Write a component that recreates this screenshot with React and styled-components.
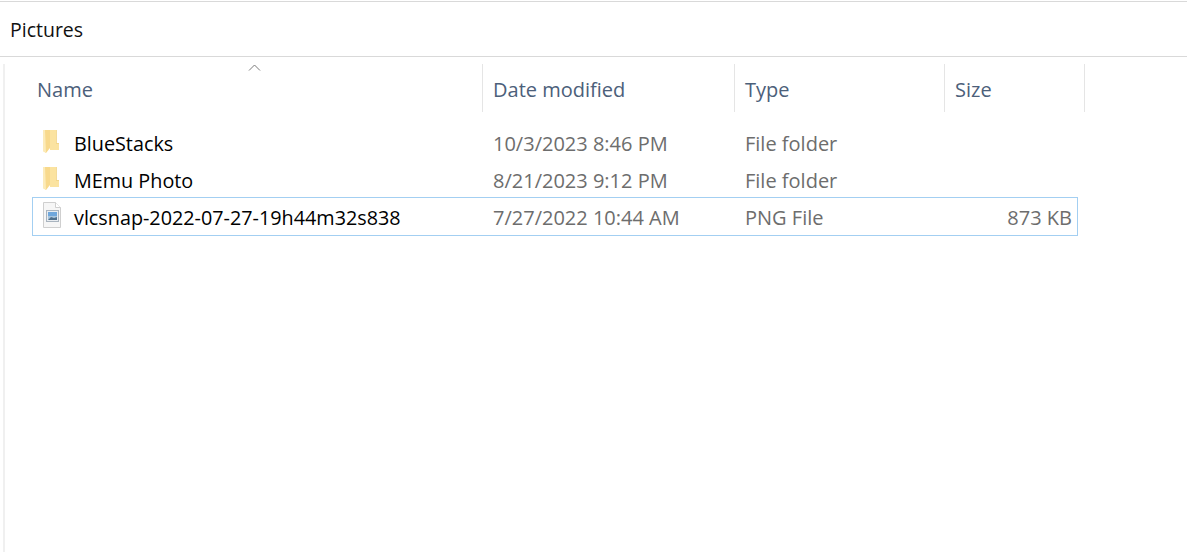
import styled, { createGlobalStyle } from "styled-components";

const GlobalStyle = createGlobalStyle`
  html, body {
    margin: 0;
    padding: 0;
    background: #fff;
    overflow: hidden;
  }
  body {
    font-family: "Open Sans", "Noto Sans", sans-serif;
  }
`;

const Window = styled.div`
  width: 1187px;
  height: 552px;
  display: flex;
  flex-direction: column;
  background: #fff;
  overflow: hidden;
`;

const TitleBar = styled.div`
  height: 56px;
  flex: none;
  box-sizing: border-box;
  border-top: 1px solid #d9d9d9;
  border-bottom: 1px solid #d9d9d9;
  padding: 0 0 0 10px;
  display: flex;
  align-items: center;
  margin-top: 1px;
  font-size: 19.5px;
  color: #111;
`;

const Body = styled.div`
  flex: 1;
  margin: 7px 0 0 3px;
  border-left: 2px solid #f0f0f0;
  padding-left: 27px;
`;

const HeaderRow = styled.div`
  position: relative;
  display: grid;
  grid-template-columns: 451px 252px 210px 140px;
  height: 48px;
`;

const HeaderCell = styled.div`
  box-sizing: border-box;
  padding: 3px 0 0 ${(p) => p.$pad}px;
  display: flex;
  align-items: center;
  border-right: 1px solid #e5e5e5;
  font-size: 20px;
  color: #4c607a;
`;

const SortCaret = styled.svg`
  position: absolute;
  left: 216px;
  top: 0;
  width: 13px;
  height: 7px;
`;

const Rows = styled.div`
  margin-top: 13px;
`;

const Row = styled.div`
  display: grid;
  grid-template-columns: 450px 252px 210px 127px;
  width: 1046px;
  height: ${(p) => (p.$selected ? 39 : 37)}px;
  padding-top: ${(p) => (p.$selected ? 2 : 0)}px;
  box-sizing: border-box;
  align-items: center;
  border: 1px solid ${(p) => (p.$selected ? "#a3cff2" : "transparent")};
  margin-top: ${(p) => (p.$selected ? -2 : 0)}px;
`;

const NameCell = styled.div`
  display: flex;
  align-items: center;
  gap: 10px;
  padding-left: 9px;
  font-size: 19.8px;
  color: #000;
  white-space: nowrap;
`;

const IconBox = styled.svg`
  width: 22px;
  height: ${(p) => p.$h}px;
  flex: none;
`;

const MetaCell = styled.div`
  padding-left: 10px;
  font-size: 20px;
  color: #6d6d6d;
  white-space: nowrap;
  text-align: ${(p) => p.$align || "left"};
`;

const FolderIcon = () => (
  <IconBox $h={27} viewBox="0 0 22 27">
    <path d="M8 0h6v13h3v7H8z" fill="#fbe3a0" />
    <path d="M14 0h.8v13H17v.8h-3z" fill="#f1d283" />
    <path d="M1 0h7v18l-4 5-3-2z" fill="#f8d98c" />
    <path d="M1 0h2l1 23-3-2z" fill="#fcebb9" />
  </IconBox>
);

const ImageFileIcon = () => (
  <IconBox $h={31} viewBox="0 0 22 31">
    <path d="M1.5 .5h12l5 5v20h-17z" fill="#f6f6f6" stroke="#cfcfcf" />
    <path d="M13.5 .5v5h5" fill="#fff" stroke="#cfcfcf" />
    <rect x="4.5" y="8.5" width="12" height="11" fill="#e9edf1" stroke="#a9b4bf" />
    <rect x="6" y="10" width="9" height="4" fill="#6fa7dc" />
    <rect x="6" y="14" width="9" height="4" fill="#a9c6de" />
    <path d="M6 18l3-3 3 1 3-1v3z" fill="#50708c" />
  </IconBox>
);

const files = [
  { name: "BlueStacks", date: "10/3/2023 8:46 PM", type: "File folder", size: "" },
  { name: "MEmu Photo", date: "8/21/2023 9:12 PM", type: "File folder", size: "" },
  { name: "vlcsnap-2022-07-27-19h44m32s838", date: "7/27/2022 10:44 AM", type: "PNG File", size: "873 KB", selected: true },
];

export default function App() {
  return (
    <Window>
      <GlobalStyle />
      <TitleBar>Pictures</TitleBar>
      <Body>
        <HeaderRow>
          <HeaderCell $pad={5}>Name</HeaderCell>
          <HeaderCell $pad={10}>Date modified</HeaderCell>
          <HeaderCell $pad={10}>Type</HeaderCell>
          <HeaderCell $pad={10}>Size</HeaderCell>
          <SortCaret viewBox="0 0 13 7">
            <path d="M1 6.5L6.5 1 12 6.5" fill="none" stroke="#7a7a7a" />
          </SortCaret>
        </HeaderRow>
        <Rows>
          {files.map((f) => (
            <Row key={f.name} $selected={f.selected}>
              <NameCell>
                {f.selected ? <ImageFileIcon /> : <FolderIcon />}
                {f.name}
              </NameCell>
              <MetaCell>{f.date}</MetaCell>
              <MetaCell>{f.type}</MetaCell>
              <MetaCell $align="right">{f.size}</MetaCell>
            </Row>
          ))}
        </Rows>
      </Body>
    </Window>
  );
}
